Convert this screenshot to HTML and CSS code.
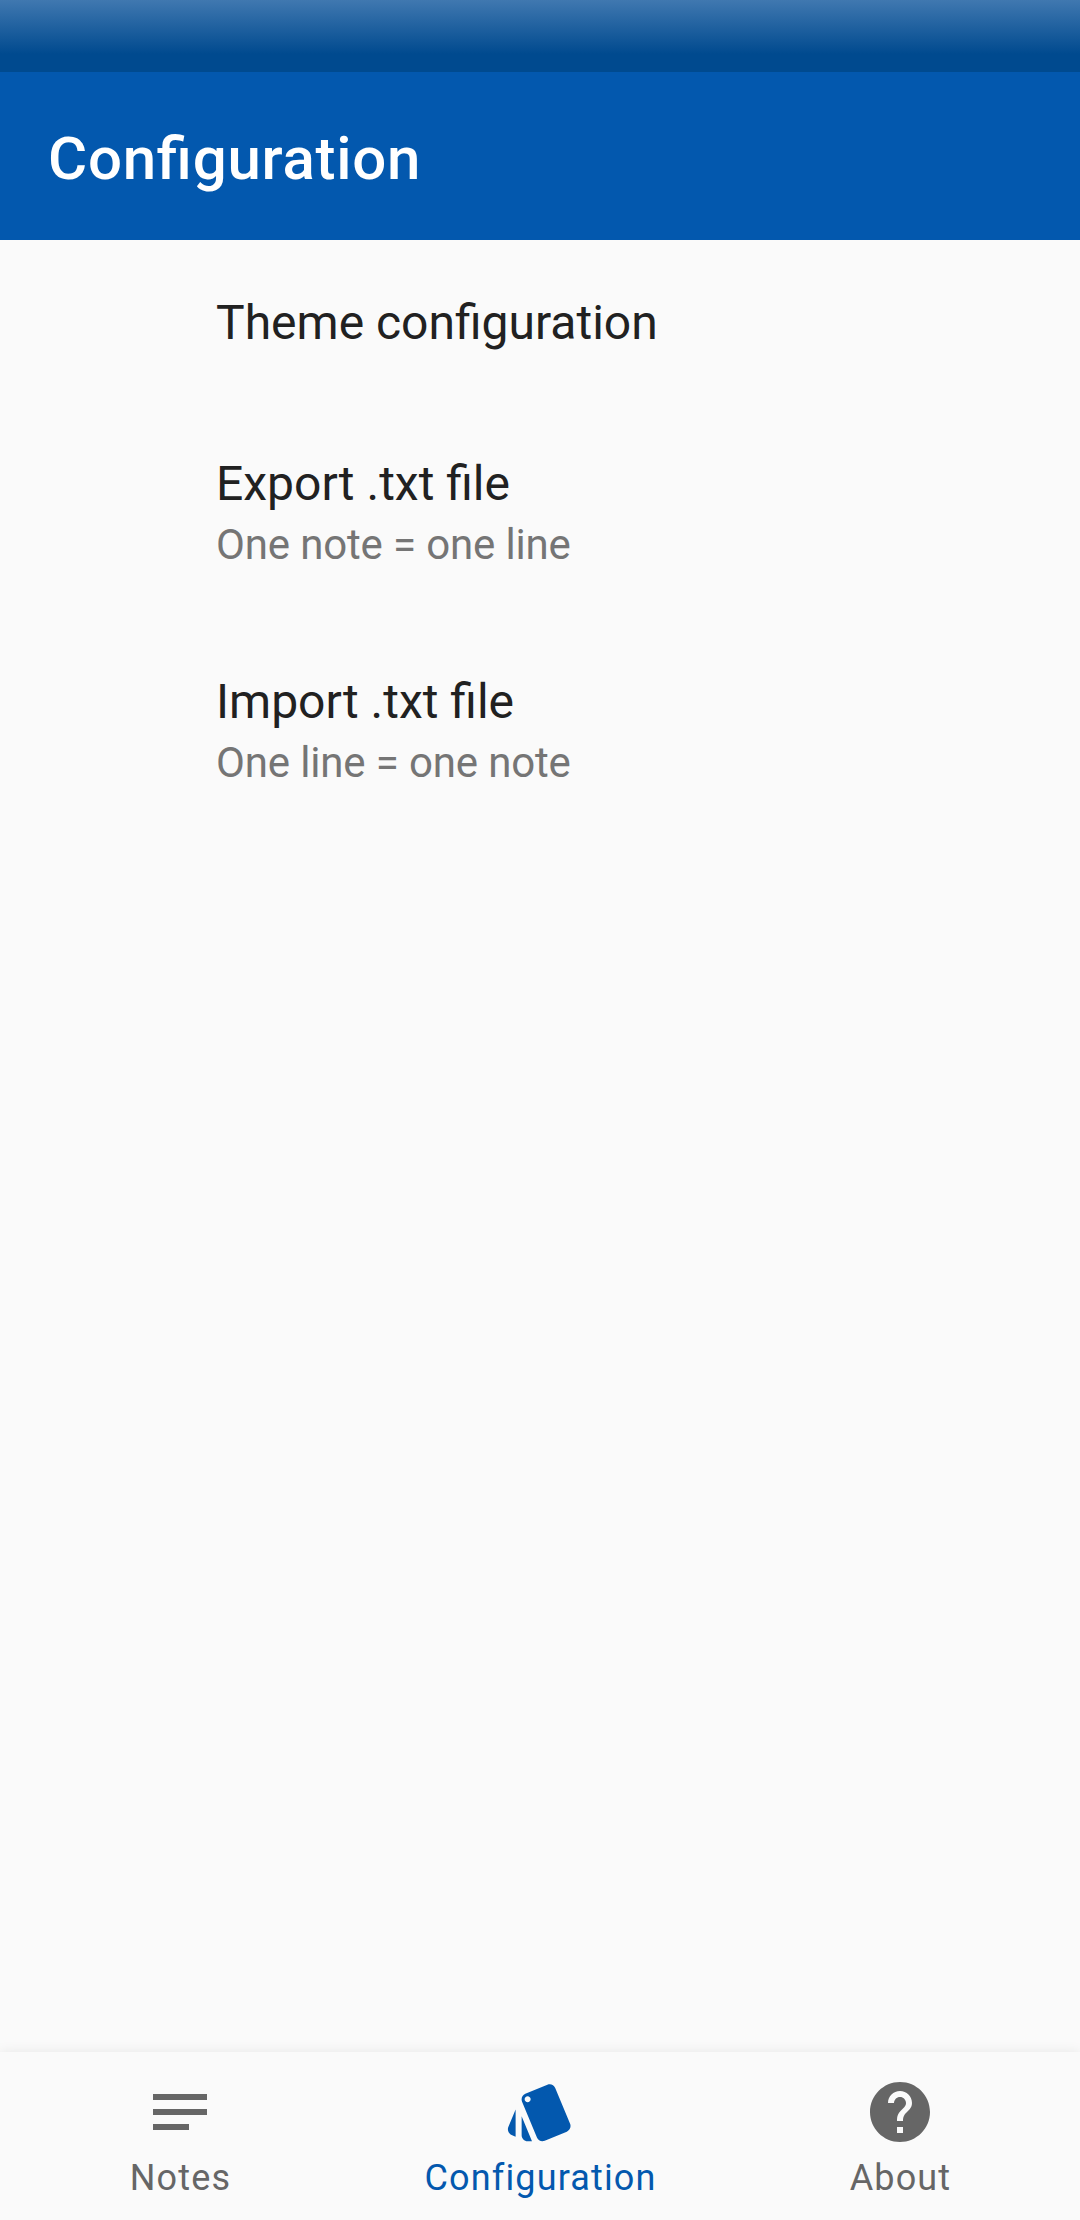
FILE: index.html
```html
<!DOCTYPE html>
<html lang="en">
<head>
<meta charset="utf-8">
<title>Configuration</title>
<link rel="stylesheet" href="styles.css">
</head>
<body>
<div class="screen">
  <div class="status-bar"></div>
  <header class="app-bar"><h1 class="app-title">Configuration</h1></header>
  <main class="settings">
    <section class="setting">
      <div class="setting-title">Theme configuration</div>
    </section>
    <section class="setting">
      <div class="setting-title">Export .txt file</div>
      <div class="setting-summary">One note = one line</div>
    </section>
    <section class="setting">
      <div class="setting-title">Import .txt file</div>
      <div class="setting-summary">One line = one note</div>
    </section>
  </main>
  <nav class="bottom-nav">
    <a class="nav-item">
      <svg class="nav-icon" viewBox="0 0 24 24"><path d="M3 18h12v-2H3v2zM3 6v2h18V6H3zm0 7h18v-2H3v2z"/></svg>
      <span class="nav-label">Notes</span>
    </a>
    <a class="nav-item nav-item-active">
      <svg class="nav-icon" viewBox="0 0 24 24"><path d="M2.53 19.65l1.34.56v-9.03l-2.43 5.86c-.41 1.02.08 2.19 1.09 2.61zm19.5-3.7L17.07 3.98c-.31-.75-1.04-1.21-1.81-1.23-.26 0-.53.04-.79.15L7.1 5.95c-.75.31-1.21 1.03-1.23 1.8-.01.27.04.54.15.8l4.96 11.97c.31.76 1.05 1.22 1.83 1.23.26 0 .52-.05.77-.15l7.36-3.05c1.02-.42 1.51-1.59 1.09-2.6zM7.88 8.75c-.55 0-1-.45-1-1s.45-1 1-1 1 .45 1 1-.45 1-1 1zm-2 11c0 1.1.9 2 2 2h1.45l-3.45-8.34v6.34z"/></svg>
      <span class="nav-label">Configuration</span>
    </a>
    <a class="nav-item">
      <svg class="nav-icon" viewBox="0 0 24 24"><path d="M12 2C6.48 2 2 6.48 2 12s4.480 10 10 10 10-4.480 10-10S17.520 2 12 2zm1 17h-2v-2h2v2zm2.070-7.750l-.9.920C13.450 12.900 13 13.500 13 15h-2v-.5c0-1.100.450-2.100 1.170-2.830l1.240-1.260c.370-.360.590-.860.590-1.410 0-1.100-.9-2-2-2s-2 .9-2 2H8c0-2.210 1.790-4 4-4s4 1.790 4 4c0 .880-.360 1.680-.930 2.250z"/></svg>
      <span class="nav-label">About</span>
    </a>
  </nav>
</div>
</body>
</html>
```
FILE: styles.css
```css
body {
  margin: 0;
  background: #fafafa;
  font-family: Roboto, "Liberation Sans", sans-serif;
}
.screen {
  display: flex;
  flex-direction: column;
  height: 2220px;
}
.status-bar {
  height: 72px;
  background: linear-gradient(#4078b0, #004a8f 54px);
}
.app-bar {
  display: flex;
  align-items: center;
  height: 168px;
  padding: 0 48px;
  background: #0358ae;
}
.app-title {
  margin: 6px 0 0;
  font-size: 60px;
  line-height: 70px;
  font-weight: 500;
  letter-spacing: 0.75px;
  font-feature-settings: "liga" 1;
  color: #fff;
}
.settings {
  flex: 1;
  display: flex;
  flex-direction: column;
  gap: 105px;
  padding: 55px 48px 0 216px;
}
.setting-title {
  font-size: 48px;
  line-height: 56px;
  color: #212121;
}
.setting-summary {
  margin-top: 8px;
  font-size: 42px;
  line-height: 49px;
  letter-spacing: -0.15px;
  color: #757575;
}
.bottom-nav {
  display: flex;
  height: 168px;
  background: #fafafa;
  box-shadow: 0 0 12px rgba(0, 0, 0, 0.08);
}
.nav-item {
  flex: 1;
  display: flex;
  flex-direction: column;
  align-items: center;
  padding-top: 24px;
  color: #666;
}
.nav-item-active {
  color: #0358ae;
}
.nav-icon {
  width: 72px;
  height: 72px;
  fill: currentColor;
}
.nav-label {
  margin-top: 9px;
  padding-left: 1px;
  font-size: 36px;
  line-height: 42px;
  letter-spacing: 1.15px;
}
```
